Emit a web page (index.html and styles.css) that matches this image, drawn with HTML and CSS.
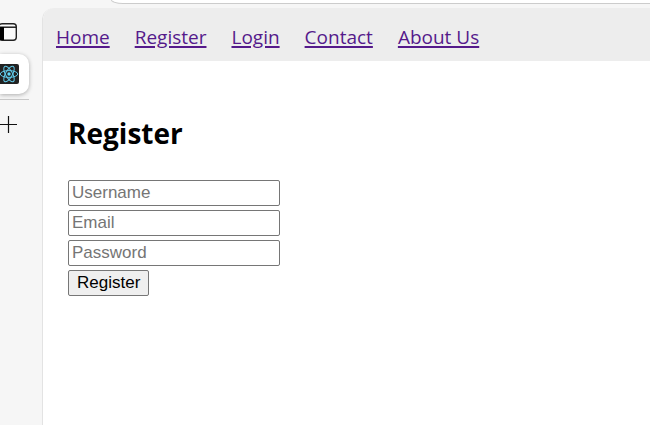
FILE: index.html
```html
<!DOCTYPE html>
<html lang="en">
<head>
<meta charset="utf-8">
<title>Register</title>
<link rel="stylesheet" href="styles.css">
</head>
<body>
<div class="toolbar"><div class="address"></div></div>
<div class="window">
  <aside class="tabs">
    <button class="tab-menu" type="button" aria-label="Tab actions">
      <svg width="18" height="20" viewBox="0 0 18 20"><rect x="-1" y="1.7" width="17.3" height="16.6" rx="3" fill="#fafafa" stroke="#222" stroke-width="1.4"/><path d="M0 5.2h16" stroke="#111" stroke-width="1.4"/><path d="M0 5h4v13H0z" fill="#000"/></svg>
    </button>
    <button class="tab" type="button" aria-label="React App">
      <svg width="19" height="20" viewBox="0 0 19 20"><rect x="-3" width="22" height="20" rx="2" fill="#222"/><g fill="none" stroke="#61c9e8" stroke-width="1"><ellipse cx="9" cy="10" rx="8.7" ry="3.4"/><ellipse cx="9" cy="10" rx="8.7" ry="3.4" transform="rotate(60 9 10)"/><ellipse cx="9" cy="10" rx="8.7" ry="3.4" transform="rotate(120 9 10)"/></g><circle cx="9" cy="10" r="1.7" fill="#61dafb"/></svg>
    </button>
    <hr class="divider">
    <button class="new-tab" type="button" aria-label="New tab">
      <svg width="17" height="18" viewBox="0 0 17 18"><path d="M0 9.5h17M8.5 1v17" stroke="#111" stroke-width="1.2"/></svg>
    </button>
  </aside>
  <div class="page">
    <nav class="nav">
      <a href="#home">Home</a>
      <a href="#register">Register</a>
      <a href="#login">Login</a>
      <a href="#contact">Contact</a>
      <a href="#about">About Us</a>
    </nav>
    <main class="content">
      <h2>Register</h2>
      <form class="form">
        <input type="text" placeholder="Username" aria-label="Username">
        <input type="email" placeholder="Email" aria-label="Email">
        <input type="password" placeholder="Password" aria-label="Password">
        <button type="submit">Register</button>
      </form>
    </main>
  </div>
</div>
</body>
</html>
```
FILE: styles.css
```css
* {
  box-sizing: border-box;
}

body {
  margin: 0;
  min-height: 100vh;
  display: flex;
  flex-direction: column;
  background: #f6f6f6;
  font-family: "Segoe UI", "Open Sans", sans-serif;
  overflow-x: hidden;
}

svg {
  display: block;
}

.toolbar {
  height: 8px;
  padding-left: 111px;
}

.address {
  height: 4px;
  background: #fff;
  border: solid #ccc;
  border-width: 0 0 1px 1px;
  border-bottom-left-radius: 12px 4px;
}

.window {
  flex: 1;
  display: grid;
  grid-template-columns: 42px 1fr;
}

.tabs {
  display: flex;
  flex-direction: column;
  align-items: flex-start;
  padding-top: 14px;
}

.tabs button {
  border: 0;
  padding: 0;
  background: none;
}

.tabs .tab {
  width: 29px;
  height: 40px;
  margin-top: 12px;
  background: #fff;
  border-radius: 0 10px 10px 0;
  box-shadow: 0 1px 4px rgba(0, 0, 0, 0.3);
}

.divider {
  width: 29px;
  margin: 5px 0 15px;
  border: 0;
  border-top: 1px solid #c8c8c8;
}

.page {
  background: #fff;
  border-left: 1px solid #e3e3e3;
  border-top-left-radius: 12px;
  overflow: hidden;
}

.nav {
  display: flex;
  gap: 25px;
  padding: 16px 13px 11px;
  background: #ededed;
  font-size: 19px;
  line-height: 26px;
}

.nav a {
  color: #551a8b;
  text-decoration-thickness: 2px;
  text-underline-offset: 2px;
}

.content {
  padding: 52px 25px;
}

.content h2 {
  margin: 0 0 27px;
  font-size: 28px;
  line-height: 40px;
}

.form {
  display: flex;
  flex-direction: column;
  align-items: flex-start;
  gap: 4px;
}

.form input,
.form button {
  height: 26px;
  border: 1px solid #767676;
  border-radius: 2px;
  font-family: Arial, "Liberation Sans", sans-serif;
  font-size: 17px;
}

.form input {
  width: 212px;
  padding: 0 3px;
  background: #fff;
}

.form input::placeholder {
  color: #757575;
}

.form button {
  padding: 0 8px;
  background: #efefef;
  color: #000;
}
```
